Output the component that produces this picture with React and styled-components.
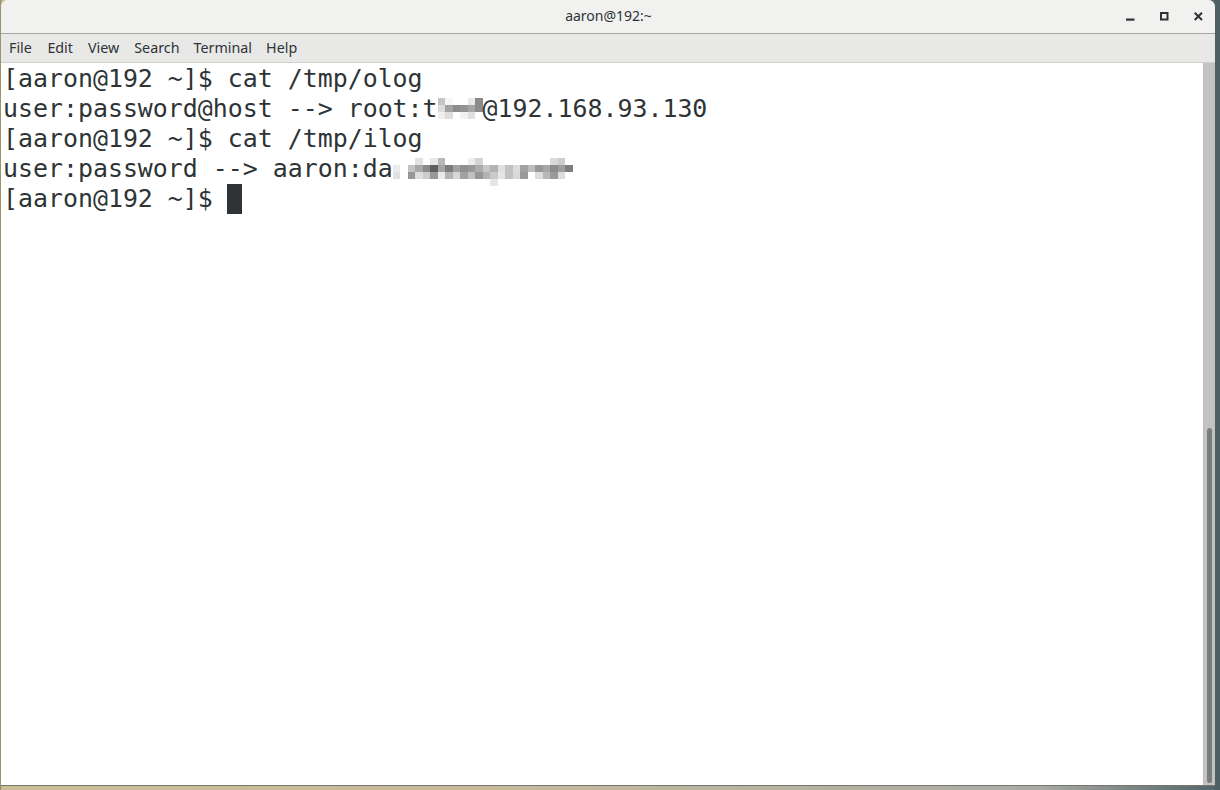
import styled, { createGlobalStyle } from "styled-components";

const GlobalStyle = createGlobalStyle`
  html, body {
    margin: 0;
    padding: 0;
    width: 1220px;
    height: 790px;
    overflow: hidden;
  }
  body {
    background: linear-gradient(90deg, #8d8560 0px, #cbbd95 2px, #c6bb9c 40%, #a9aba4 85%, #55676b 99.4%);
  }
`;

const Desktop = styled.div`
  width: 1220px;
  height: 790px;
  display: flex;
  align-items: flex-start;
  padding-left: 1px;
  box-sizing: border-box;
  background: linear-gradient(90deg, transparent 0, transparent 1214px, #4d6064 1215px);
`;

const Window = styled.div`
  width: 1214px;
  height: 786px;
  display: flex;
  flex-direction: column;
  background: #ffffff;
  border-bottom: 1px solid #77776f;
  border-radius: 7px 7px 0 0;
  box-sizing: border-box;
  overflow: hidden;
  font-family: "Noto Sans", "Open Sans", sans-serif;
`;

const TitleBar = styled.div`
  height: 33px;
  flex: none;
  display: grid;
  grid-template-columns: 1fr auto 1fr;
  align-items: center;
  background: #f1f1f0;
  border-bottom: 1px solid #a7a7a2;
`;

const Title = styled.div`
  grid-column: 2;
  font-size: 14px;
  color: #2e3436;
  padding-left: 1px;
  padding-bottom: 2px;
`;

const Controls = styled.div`
  grid-column: 3;
  justify-self: end;
  display: flex;
`;

const ControlButton = styled.div`
  width: 34px;
  height: 33px;
  display: flex;
  align-items: center;
  justify-content: center;
  color: #2e3436;
`;

const MenuBar = styled.div`
  height: 28px;
  flex: none;
  display: flex;
  align-items: center;
  background: #e8e8e7;
  border-bottom: 1px solid #cfcfcd;
`;

const MenuItem = styled.div`
  padding: 0 ${({ $pad }) => $pad}px;
  font-size: 14.3px;
  color: #2e3436;
  line-height: 28px;
`;

const TermBody = styled.div`
  flex: 1;
  display: flex;
  min-height: 0;
`;

const Screen = styled.div`
  flex: 1;
  padding: 1px 0 0 2px;
  font-family: "DejaVu Sans Mono", "Liberation Mono", monospace;
  font-size: 24.9px;
  line-height: 30px;
  color: #2e3436;
  white-space: pre;
`;

const Line = styled.div`
  height: 30px;
`;

const Cursor = styled.span`
  display: inline-block;
  width: 15px;
  height: 30px;
  margin-left: -1px;
  background: #2e3436;
  vertical-align: top;
`;

const Mosaic = styled.span`
  display: inline-grid;
  grid-template-columns: repeat(${({ $cols }) => $cols}, ${({ $cell }) => $cell}px);
  grid-auto-rows: 7px;
  vertical-align: top;
  margin-top: ${({ $top }) => $top}px;
`;

const Pixel = styled.span`
  display: block;
  background: ${({ $c }) => $c};
`;

const Trough = styled.div`
  width: 12px;
  flex: none;
  display: flex;
  flex-direction: column;
  justify-content: flex-end;
  padding: 0 3px 2px 3px;
  box-sizing: border-box;
  background: #c3c3c1;
  border-left: 1px solid #bdbdbb;
`;

const Thumb = styled.div`
  height: 355px;
  border-radius: 3px;
  background: #7b7d7c;
`;

const MinimizeIcon = () => (
  <svg width="9" height="9" viewBox="0 0 9 9">
    <rect x="0" y="6.5" width="8.5" height="2.2" fill="currentColor" />
  </svg>
);

const MaximizeIcon = () => (
  <svg width="9" height="9" viewBox="0 0 9 9">
    <rect x="1" y="1" width="6.5" height="6.5" fill="none" stroke="currentColor" strokeWidth="2" />
  </svg>
);

const CloseIcon = () => (
  <svg width="9" height="9" viewBox="0 0 9 9">
    <path d="M0.7 0.7 L8 8 M8 0.7 L0.7 8" stroke="currentColor" strokeWidth="2" />
  </svg>
);

const hostSecret = [
  ["#c4c4c4", "#f6f6f6", "#ffffff", "#ffffff", "#e9e9e9", "#8a8a8a"],
  ["#dcdcdc", "#a2a2a2", "#8c8c8c", "#939393", "#a5a5a5", "#8c8c8c"],
  ["#efefef", "#dedede", "#ffffff", "#f2f2f2", "#e0e0e0", "#ffffff"],
];

const userSecret = [
  ["#ffffff", "#ffffff", "#ffffff", "#e2e2e2", "#ffffff", "#e6e6e6", "#b8b8b8", "#ffffff", "#ffffff", "#ffffff", "#eeeeee", "#d4d4d4", "#ffffff", "#ffffff", "#ffffff", "#ffffff", "#ffffff", "#ffffff", "#ffffff", "#ffffff", "#ffffff", "#dadada", "#cccccc", "#ffffff"],
  ["#ececec", "#ffffff", "#c4c4c4", "#a8a8a8", "#8a8a8a", "#5e5e5e", "#a4a4a4", "#7c7c7c", "#a2a2a2", "#909090", "#989898", "#acacac", "#c6c6c6", "#b2b2b2", "#e0e0e0", "#c2c2c2", "#dcdcdc", "#a2a2a2", "#bcbcbc", "#989898", "#a6a6a6", "#8c8c8c", "#9e9e9e", "#7e7e7e"],
  ["#e2e2e2", "#ffffff", "#969696", "#dcdcdc", "#cccccc", "#989898", "#eaeaea", "#b4b4b4", "#d6d6d6", "#a2a2a2", "#c0c0c0", "#969696", "#b2b2b2", "#cacaca", "#e6e6e6", "#c2c2c2", "#d8d8d8", "#9a9a9a", "#ffffff", "#dedede", "#b8b8b8", "#9a9a9a", "#dcdcdc", "#ffffff"],
  ["#ffffff", "#ffffff", "#ffffff", "#ffffff", "#ffffff", "#ffffff", "#ffffff", "#ffffff", "#ffffff", "#ffffff", "#ffffff", "#ffffff", "#ffffff", "#e6e6e6", "#ffffff", "#ffffff", "#ffffff", "#ffffff", "#ffffff", "#ffffff", "#ffffff", "#ffffff", "#ffffff", "#ffffff"],
];

function Redacted({ rows, cell, top }) {
  return (
    <Mosaic $cols={rows[0].length} $cell={cell} $top={top}>
      {rows.flat().map((c, i) => (
        <Pixel key={i} $c={c} />
      ))}
    </Mosaic>
  );
}

const menus = [
  { label: "File", pad: 8 },
  { label: "Edit", pad: 7.5 },
  { label: "View", pad: 7.5 },
  { label: "Search", pad: 7.5 },
  { label: "Terminal", pad: 6.5 },
  { label: "Help", pad: 7.5 },
];

export default function App() {
  return (
    <>
      <GlobalStyle />
      <Desktop>
        <Window>
          <TitleBar>
            <Title>aaron@192:~</Title>
            <Controls>
              <ControlButton><MinimizeIcon /></ControlButton>
              <ControlButton><MaximizeIcon /></ControlButton>
              <ControlButton><CloseIcon /></ControlButton>
            </Controls>
          </TitleBar>
          <MenuBar>
            {menus.map((m) => (
              <MenuItem key={m.label} $pad={m.pad}>{m.label}</MenuItem>
            ))}
          </MenuBar>
          <TermBody>
            <Screen>
              <Line>[aaron@192 ~]$ cat /tmp/olog</Line>
              <Line>
                user:password@host --&gt; root:t
                <Redacted rows={hostSecret} cell={7.5} top={4} />
                @192.168.93.130
              </Line>
              <Line>[aaron@192 ~]$ cat /tmp/ilog</Line>
              <Line>
                user:password --&gt; aaron:da
                <Redacted rows={userSecret} cell={7.5} top={4} />
              </Line>
              <Line>
                [aaron@192 ~]$ <Cursor />
              </Line>
            </Screen>
            <Trough>
              <Thumb />
            </Trough>
          </TermBody>
        </Window>
      </Desktop>
    </>
  );
}
